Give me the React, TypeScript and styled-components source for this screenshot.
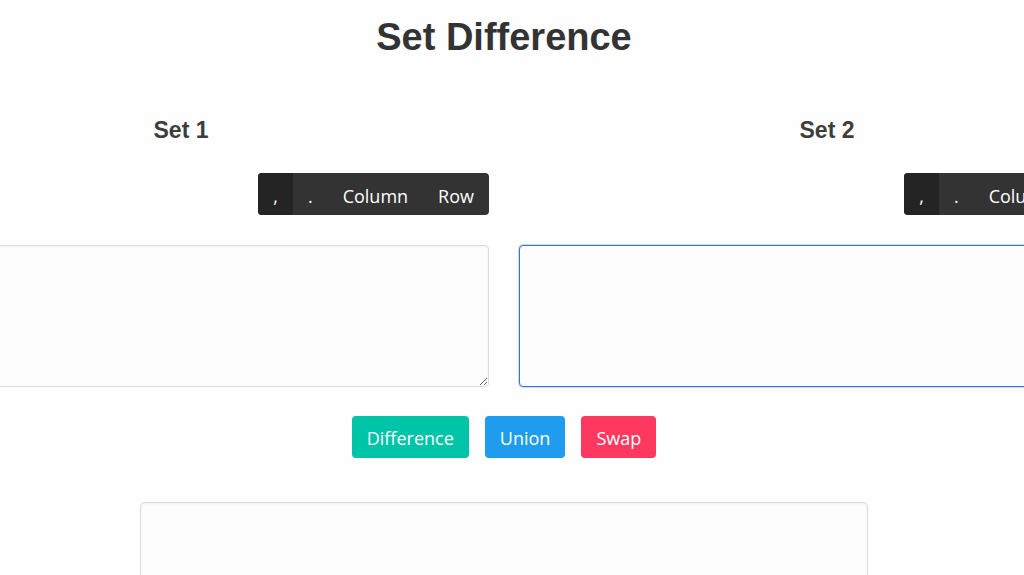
import React from 'react';
import styled, { createGlobalStyle } from 'styled-components';

const GlobalStyle = createGlobalStyle`
	html, body {
		margin: 0;
		overflow: hidden;
		background: #fefefe;
	}
`;

const App = () => {
	const separators = [',', '.', 'Column', 'Row'];
	return (
		<>
			<GlobalStyle />
			<Page>
				<Title>Set Difference</Title>
				<Columns>
					{['Set 1', 'Set 2'].map((label, i) => (
						<Column key={label}>
							<Label>{label}</Label>
							<Toolbar>
								{separators.map((s, j) => (
									<Segment key={s} $active={j === 0}>
										{s}
									</Segment>
								))}
							</Toolbar>
							<Input $focused={i === 1} autoFocus={i === 1} />
						</Column>
					))}
				</Columns>
				<Actions>
					<Button $color='#00c4a7'>Difference</Button>
					<Button $color='#209cee'>Union</Button>
					<Button $color='#ff3860'>Swap</Button>
				</Actions>
				<Output />
			</Page>
		</>
	);
};

const Page = styled.main`
	width: 1008px;
	display: flex;
	flex-direction: column;
	align-items: center;
	font-family: 'Open Sans', sans-serif;
`;

const Title = styled.h1`
	margin: 14px 0 0;
	font-family: 'Liberation Sans', Arial, sans-serif;
	font-size: 38px;
	line-height: 46px;
	font-weight: 700;
	color: #333;
`;

const Columns = styled.div`
	display: flex;
	gap: 30px;
	width: 1262px;
	flex-shrink: 0;
	margin-top: 56px;
`;

const Column = styled.section`
	width: 616px;
	display: flex;
	flex-direction: column;
`;

const Label = styled.h2`
	margin: 0;
	text-align: center;
	font-family: 'Liberation Sans', Arial, sans-serif;
	font-size: 23px;
	line-height: 28px;
	font-weight: 700;
	color: #3d3d3d;
`;

const Toolbar = styled.div`
	align-self: flex-end;
	display: flex;
	margin-top: 29px;
	height: 42px;
	background: #333;
	border-radius: 4px;
	overflow: hidden;
`;

const Segment = styled.button<{ $active?: boolean }>`
	border: 0;
	padding: 3px 15px 0;
	height: 42px;
	background: ${(p) => (p.$active ? '#242424' : 'transparent')};
	color: #fff;
	font-family: 'Open Sans', sans-serif;
	font-size: 18px;
	cursor: pointer;
`;

const Input = styled.textarea<{ $focused?: boolean }>`
	margin-top: 30px;
	height: 142px;
	box-sizing: border-box;
	padding: 12px;
	resize: vertical;
	border: 1px solid ${(p) => (p.$focused ? '#3273dc' : '#dbdbdb')};
	border-radius: 4px;
	background: #fdfdfd;
	font-family: 'Open Sans', sans-serif;
	font-size: 18px;
	outline: none;
	box-shadow: ${(p) => (p.$focused ? '0 0 0 1px rgba(50,115,220,0.25)' : 'inset 0 1px 2px rgba(0,0,0,0.05)')};
`;

const Actions = styled.div`
	display: flex;
	gap: 16px;
	margin-top: 29px;
`;

const Button = styled.button<{ $color: string }>`
	height: 42px;
	padding: 1px 15px 0;
	border: 0;
	border-radius: 4px;
	background: ${(p) => p.$color};
	color: #fff;
	font-family: 'Open Sans', sans-serif;
	font-size: 18px;
	cursor: pointer;
`;

const Output = styled.div`
	margin-top: 44px;
	width: 728px;
	height: 200px;
	box-sizing: border-box;
	border: 1px solid #dbdbdb;
	border-radius: 4px;
	background: #fdfdfd;
	box-shadow: inset 0 1px 2px rgba(0, 0, 0, 0.05);
`;

export default App;
